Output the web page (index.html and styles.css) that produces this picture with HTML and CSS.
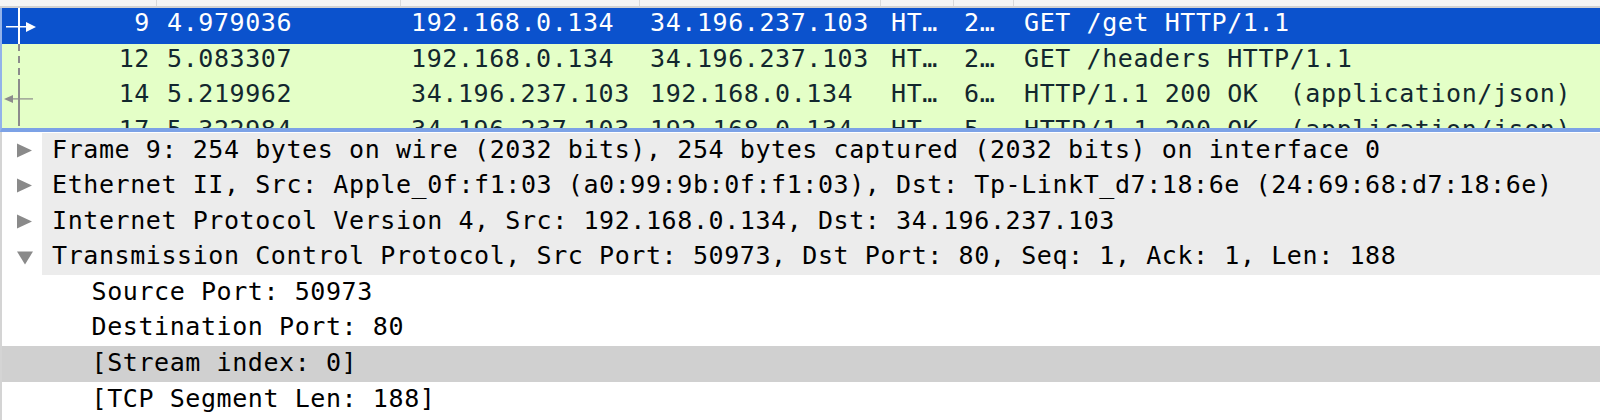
FILE: index.html
```html
<!DOCTYPE html>
<html>
<head>
<meta charset="utf-8">
<link rel="stylesheet" href="styles.css">
</head>
<body>
<div class="app">
  <div class="plist">
    <div class="phead">
      <div class="hc c-no"></div>
      <div class="hc c-time"></div>
      <div class="hc c-src"></div>
      <div class="hc c-dst"></div>
      <div class="hc c-proto"></div>
      <div class="hc c-len"></div>
      <div class="hc c-info"></div>
    </div>
    <div class="pbody">
      <div class="prow sel">
        <div class="cell c-no">
          <svg class="rel" width="40" height="36" viewBox="0 0 40 36">
            <rect x="16" y="0" width="2" height="36" fill="#ffffff"/>
            <rect x="4" y="18" width="22" height="1.5" fill="#ffffff"/>
            <polygon points="24,14 34,19 24,24" fill="#ffffff"/>
          </svg>
          <span class="num">9</span>
        </div>
        <div class="cell c-time">4.979036</div>
        <div class="cell c-src">192.168.0.134</div>
        <div class="cell c-dst">34.196.237.103</div>
        <div class="cell c-proto">HT…</div>
        <div class="cell c-len">2…</div>
        <div class="cell c-info">GET /get HTTP/1.1</div>
      </div>
      <div class="prow">
        <div class="cell c-no">
          <svg class="rel" width="40" height="36" viewBox="0 0 40 36">
            <line x1="17" y1="0" x2="17" y2="36" stroke="#8c8c8c" stroke-width="2" stroke-dasharray="7 5"/>
          </svg>
          <span class="num">12</span>
        </div>
        <div class="cell c-time">5.083307</div>
        <div class="cell c-src">192.168.0.134</div>
        <div class="cell c-dst">34.196.237.103</div>
        <div class="cell c-proto">HT…</div>
        <div class="cell c-len">2…</div>
        <div class="cell c-info">GET /headers HTTP/1.1</div>
      </div>
      <div class="prow">
        <div class="cell c-no">
          <svg class="rel" width="40" height="36" viewBox="0 0 40 36">
            <rect x="16" y="0" width="2" height="36" fill="#8c8c8c"/>
            <rect x="6" y="19.3" width="25" height="1.2" fill="#8c8c8c"/>
            <polygon points="2,20 11,16 11,24" fill="#8c8c8c"/>
          </svg>
          <span class="num">14</span>
        </div>
        <div class="cell c-time">5.219962</div>
        <div class="cell c-src">34.196.237.103</div>
        <div class="cell c-dst">192.168.0.134</div>
        <div class="cell c-proto">HT…</div>
        <div class="cell c-len">6…</div>
        <div class="cell c-info">HTTP/1.1 200 OK  (application/json)</div>
      </div>
      <div class="prow">
        <div class="cell c-no">
          <svg class="rel" width="40" height="36" viewBox="0 0 40 36">
            <rect x="16" y="0" width="2" height="11" fill="#8c8c8c"/>
          </svg>
          <span class="num">17</span>
        </div>
        <div class="cell c-time">5.322984</div>
        <div class="cell c-src">34.196.237.103</div>
        <div class="cell c-dst">192.168.0.134</div>
        <div class="cell c-proto">HT…</div>
        <div class="cell c-len">5…</div>
        <div class="cell c-info">HTTP/1.1 200 OK  (application/json)</div>
      </div>
    </div>
  </div>
  <div class="tree">
    <div class="trow top">
      <span class="tog"><svg width="40" height="36" viewBox="0 0 40 36"><polygon points="15,10.5 30,17.5 15,24.5" fill="#8a8a8a"/></svg></span>
      <span class="tlabel">Frame 9: 254 bytes on wire (2032 bits), 254 bytes captured (2032 bits) on interface 0</span>
    </div>
    <div class="trow top">
      <span class="tog"><svg width="40" height="36" viewBox="0 0 40 36"><polygon points="15,10.5 30,17.5 15,24.5" fill="#8a8a8a"/></svg></span>
      <span class="tlabel">Ethernet II, Src: Apple_0f:f1:03 (a0:99:9b:0f:f1:03), Dst: Tp-LinkT_d7:18:6e (24:69:68:d7:18:6e)</span>
    </div>
    <div class="trow top">
      <span class="tog"><svg width="40" height="36" viewBox="0 0 40 36"><polygon points="15,10.5 30,17.5 15,24.5" fill="#8a8a8a"/></svg></span>
      <span class="tlabel">Internet Protocol Version 4, Src: 192.168.0.134, Dst: 34.196.237.103</span>
    </div>
    <div class="trow top">
      <span class="tog"><svg width="40" height="36" viewBox="0 0 40 36"><polygon points="15,12.5 31,12.5 23,25.5" fill="#8a8a8a"/></svg></span>
      <span class="tlabel">Transmission Control Protocol, Src Port: 50973, Dst Port: 80, Seq: 1, Ack: 1, Len: 188</span>
    </div>
    <div class="trow child"><span class="tlabel">Source Port: 50973</span></div>
    <div class="trow child"><span class="tlabel">Destination Port: 80</span></div>
    <div class="trow child hl"><span class="tlabel">[Stream index: 0]</span></div>
    <div class="trow child"><span class="tlabel">[TCP Segment Len: 188]</span></div>
  </div>
</div>
</body>
</html>
```

FILE: styles.css
```css
html, body {
  margin: 0;
  padding: 0;
  background: #ffffff;
}
body {
  width: 1600px;
  height: 420px;
  overflow: hidden;
  font-family: "DejaVu Sans Mono", "Liberation Mono", monospace;
  font-size: 25px;
  letter-spacing: 0.58px;
}
.app {
  display: flex;
  flex-direction: column;
  width: 1600px;
  height: 420px;
}
.plist {
  display: flex;
  flex-direction: column;
}
.phead {
  display: flex;
  height: 6px;
  background: #f5f5f5;
  border-bottom: 2px solid #d2d2d2;
  padding-left: 2px;
}
.hc {
  box-sizing: border-box;
  border-right: 1px solid #dadada;
  height: 6px;
}
.hc.c-info {
  border-right: none;
}
.pbody {
  height: 120px;
  overflow: hidden;
  border-left: 2px solid #93b3ea;
  border-bottom: 4px solid #7ca2e6;
  background: #e4ffc7;
}
.prow {
  display: flex;
  height: 35.5px;
  line-height: 30px;
  color: #12272e;
  background: #e4ffc7;
  white-space: pre;
}
.prow.sel {
  background: #0b52cd;
  color: #ffffff;
}
.cell {
  box-sizing: border-box;
  overflow: hidden;
  padding-left: 10px;
  flex: none;
}
.c-no {
  width: 155px;
  padding-left: 0;
  display: flex;
  align-items: flex-start;
}
.c-no .rel {
  display: block;
  flex: none;
}
.c-no .num {
  margin-left: auto;
  padding-right: 7px;
}
.c-time { width: 244px; }
.c-src { width: 239px; }
.c-dst { width: 241px; }
.c-proto { width: 73px; }
.c-len { width: 60px; }
.c-info { flex: 1; }
.phead .c-info { flex: 1; }
.phead .c-no { width: 155px; }

.tree {
  flex: 1;
  border-left: 2px solid #d4d4d4;
  padding-top: 0.5px;
  overflow: hidden;
}
.trow {
  display: flex;
  height: 35.6px;
  color: #000000;
  white-space: pre;
}
.tog {
  width: 40px;
  flex: none;
  display: block;
}
.tog svg {
  display: block;
}
.tlabel {
  flex: 1;
  line-height: 33px;
  height: 35.6px;
  box-sizing: border-box;
}
.trow.top .tlabel {
  background: #ececec;
  padding-left: 10px;
}
.trow.child .tlabel {
  padding-left: 89.5px;
}
.trow.hl {
  background: #d0d0d0;
}
```
